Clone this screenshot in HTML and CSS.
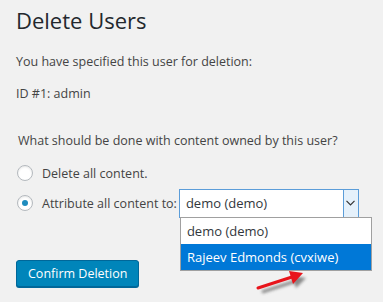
FILE: index.html
```html
<!DOCTYPE html>
<html lang="en">
<head>
    <meta charset="UTF-8">
    <title>Delete Users</title>
    <link rel="stylesheet" href="styles.css">
</head>
<body>
    <div class="wrap">
        <h1>Delete Users</h1>
        <p>You have specified this user for deletion:</p>
        <p>ID #1: admin</p>

        <fieldset class="choices">
            <p class="legend">What should be done with content owned by this user?</p>
            <label class="choice">
                <span class="radio"></span>
                <span>Delete all content.</span>
            </label>
            <div class="choice">
                <span class="radio checked"></span>
                <span>Attribute all content to:</span>
                <div class="select">
                    <span class="select-value">demo (demo)</span>
                    <span class="select-arrow">
                        <svg width="9" height="6" viewBox="0 0 9 6"><path d="M0.5 0.8 L4.5 4.8 L8.5 0.8" fill="none" stroke="#333" stroke-width="1.2"/></svg>
                    </span>
                    <ul class="options">
                        <li>demo (demo)</li>
                        <li class="active">Rajeev Edmonds (cvxiwe)</li>
                    </ul>
                </div>
            </div>
        </fieldset>

        <button class="button-primary">Confirm Deletion</button>
    </div>

    <svg class="pointer" width="70" height="34" viewBox="0 0 70 34">
        <defs>
            <filter id="blur" x="-20%" y="-50%" width="140%" height="200%">
                <feGaussianBlur stdDeviation="1.6"/>
            </filter>
        </defs>
        <g filter="url(#blur)" opacity="0.55">
            <path d="M6 24 L40 13" stroke="#333" stroke-width="3"/>
            <path d="M36 8 L50 10 L40 20 Z" fill="#333"/>
        </g>
        <path d="M2 20 L36 9" stroke="#e8141b" stroke-width="3" stroke-linecap="round"/>
        <path d="M33 3 L47 5 L37 16 Z" fill="#e8141b"/>
    </svg>
</body>
</html>
```

FILE: styles.css
```css
body {
    margin: 0;
    background: #f1f1f1;
    color: #444;
    font-family: "Open Sans", "Noto Sans", sans-serif;
    font-size: 12.5px;
    position: relative;
    height: 302px;
    overflow: hidden;
}
.wrap {
    padding: 6px 16px 0 16px;
}
h1 {
    margin: 0 0 18px 0;
    font-size: 22px;
    font-weight: 400;
    color: #23282d;
    line-height: 29px;
}
p {
    margin: 0 0 14px 0;
    line-height: 18px;
}
.choices {
    border: none;
    margin: 29px 0 0 0;
    padding: 0 0 0 2px;
}
.choices .legend {
    margin-bottom: 9px;
}
.choice {
    display: flex;
    align-items: center;
    height: 28px;
    margin-left: -1px;
}
.choice + .choice {
    margin-top: 2px;
}
.radio {
    width: 14px;
    height: 14px;
    border: 1px solid #b4b9be;
    border-radius: 50%;
    background: #fff;
    box-shadow: inset 0 1px 2px rgba(0,0,0,0.1);
    margin-right: 9px;
    display: flex;
    align-items: center;
    justify-content: center;
    flex-shrink: 0;
}
.radio.checked::after {
    content: "";
    width: 6px;
    height: 6px;
    border-radius: 50%;
    background: #1e8cbe;
}
.select {
    position: relative;
    display: flex;
    align-items: center;
    width: 180px;
    height: 29px;
    box-sizing: border-box;
    border: 1px solid #5b9dd9;
    background: #fff;
    margin-left: 2px;
    color: #32373c;
    font-size: 13px;
}
.select-value {
    flex: 1;
    padding-left: 6px;
}
.select-arrow {
    width: 15px;
    height: 27px;
    box-sizing: border-box;
    border-left: 1px solid #5b9dd9;
    background: #e5f1fb;
    display: flex;
    align-items: center;
    justify-content: center;
}
.options {
    position: absolute;
    top: 27px;
    left: 0;
    width: 192px;
    margin: 0;
    padding: 0;
    list-style: none;
    background: #fff;
    border: 1px solid #a0a0a0;
    box-sizing: border-box;
    z-index: 2;
}
.options li {
    height: 26px;
    line-height: 26px;
    padding-left: 6px;
    white-space: nowrap;
}
.options li.active {
    background: #0078d7;
    color: #fff;
}
.button-primary {
    margin-top: 43px;
    height: 27px;
    padding: 0 11px;
    background: #0085ba;
    border: 1px solid #006799;
    border-radius: 3px;
    box-shadow: 0 1px 0 #006799;
    color: #fff;
    font-family: inherit;
    font-size: 12.5px;
}
.pointer {
    position: absolute;
    left: 256px;
    top: 268px;
    z-index: 3;
}
```
